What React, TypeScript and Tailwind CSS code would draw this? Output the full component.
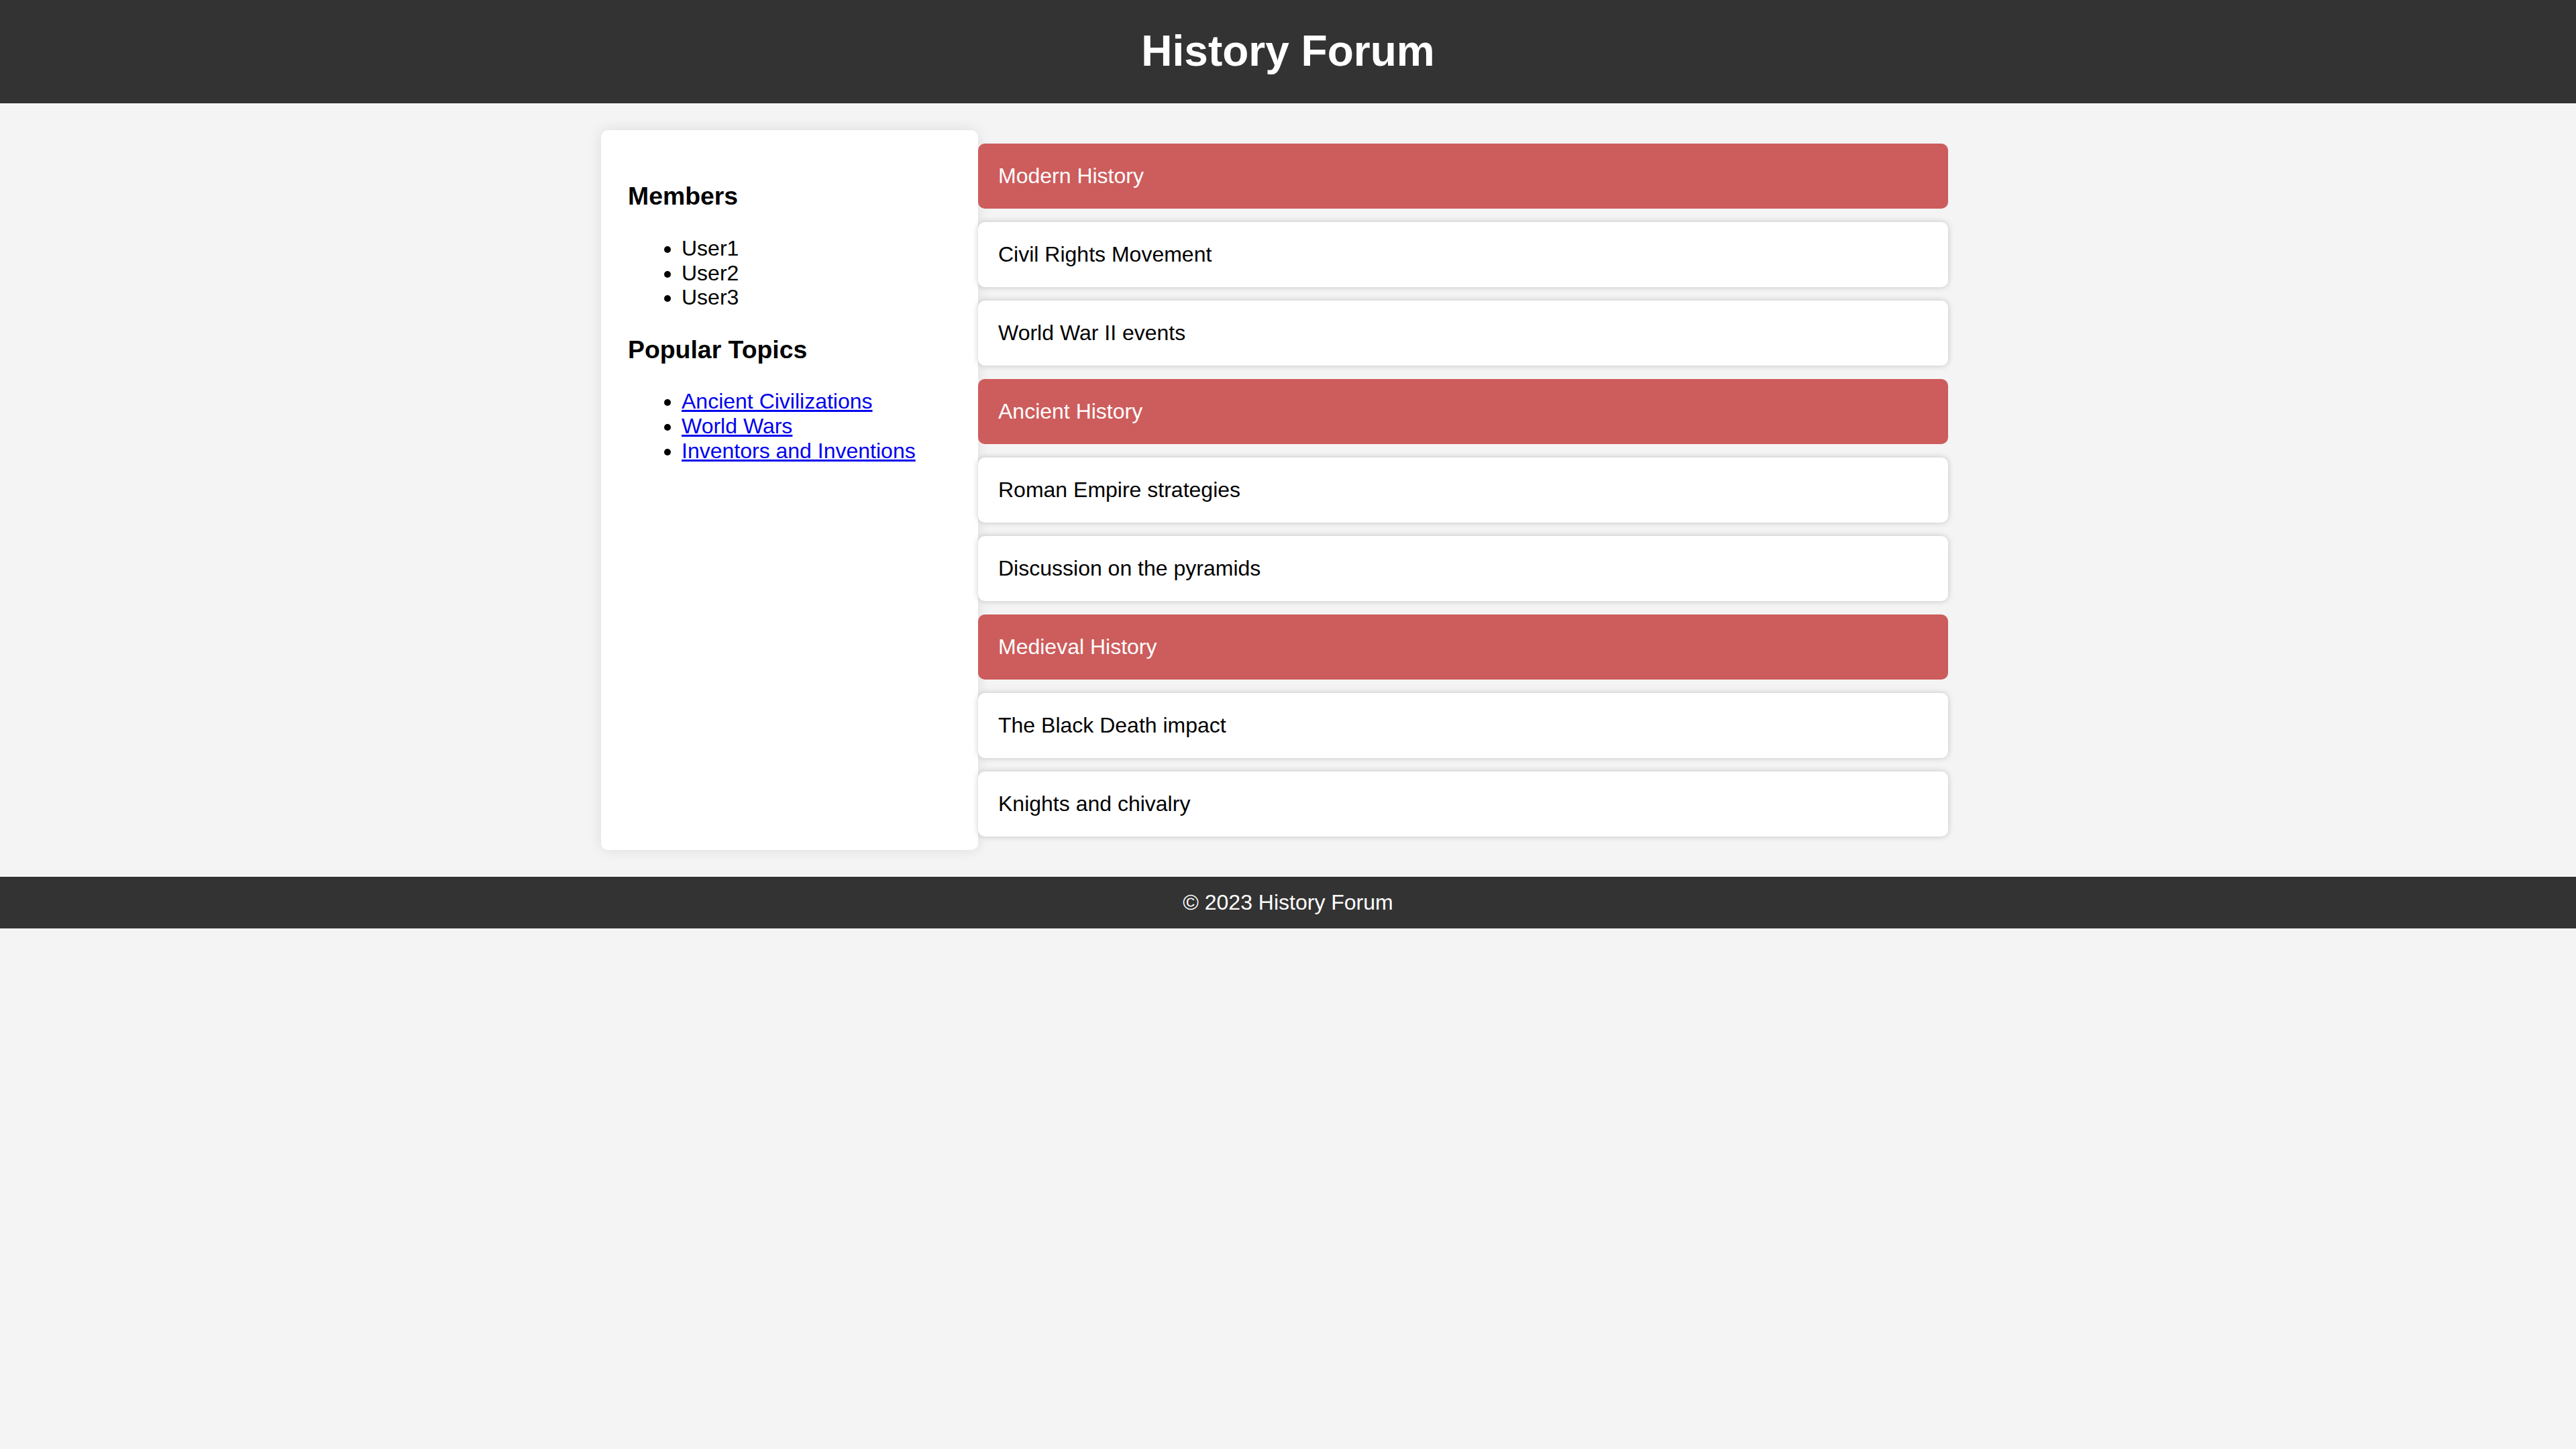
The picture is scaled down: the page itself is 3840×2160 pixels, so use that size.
import React from 'react';

const sections = [
  { title: 'Modern History', topics: ['Civil Rights Movement', 'World War II events'] },
  { title: 'Ancient History', topics: ['Roman Empire strategies', 'Discussion on the pyramids'] },
  { title: 'Medieval History', topics: ['The Black Death impact', 'Knights and chivalry'] },
];

const members = ['User1', 'User2', 'User3'];
const popular = ['Ancient Civilizations', 'World Wars', 'Inventors and Inventions'];

const App = () => {
  return (
    <div className="min-h-[2160px] bg-[#f4f4f4] text-black font-['Liberation_Sans',Arial,sans-serif] text-[32px] leading-[36.8px]">
      <header className="bg-[#333333] pt-[40px] pb-[40.5px] text-center text-white">
        <h1 className="m-0 text-[64px] leading-[73.6px] font-bold">History Forum</h1>
      </header>

      <div className="mx-auto my-[40px] flex w-[2048px]">
        <aside className="w-[562px] shrink-0 rounded-[10px] bg-white p-[40px] shadow-[0_0_20px_rgba(0,0,0,0.1)]">
          <h3 className="mt-[37.4px] mb-[37.4px] text-[37.4px] leading-[43px] font-bold">Members</h3>
          <ul className="list-disc pl-[80px]">
            {members.map((m) => (
              <li key={m}>{m}</li>
            ))}
          </ul>
          <h3 className="mt-[37.4px] mb-[37.4px] text-[37.4px] leading-[43px] font-bold">Popular Topics</h3>
          <ul className="list-disc pl-[80px]">
            {popular.map((p) => (
              <li key={p}>
                <a href="#" className="text-[#0000ee] underline">
                  {p}
                </a>
              </li>
            ))}
          </ul>
        </aside>

        <main className="flex flex-1 flex-col gap-[20px] py-[20px] pr-[40px]">
          {sections.map((s) => (
            <React.Fragment key={s.title}>
              <div className="rounded-[10px] bg-[#cd5c5c] p-[30px] leading-[37px] text-white">{s.title}</div>
              {s.topics.map((t) => (
                <div key={t} className="rounded-[10px] bg-white p-[30px] leading-[37px] shadow-[0_0_10px_rgba(0,0,0,0.2)]">
                  {t}
                </div>
              ))}
            </React.Fragment>
          ))}
        </main>
      </div>

      <footer className="bg-[#333333] py-[20px] text-center text-white">© 2023 History Forum</footer>
    </div>
  );
};

export default App;
